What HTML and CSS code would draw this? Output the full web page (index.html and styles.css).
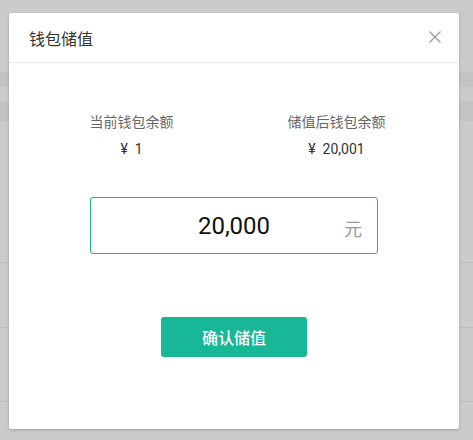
FILE: index.html
```html
<!DOCTYPE html>
<html lang="zh-CN">
<head>
<meta charset="utf-8">
<title>钱包储值</title>
<link rel="stylesheet" href="styles.css">
</head>
<body>
<div class="backdrop">
  <div class="bg-top"></div>
  <div class="bg-band band1"></div>
  <div class="bg-gap"></div>
  <div class="bg-band band2"></div>
  <div class="bg-row r1"></div>
  <div class="bg-row r2"></div>
  <div class="bg-row r3"></div>
</div>
<div class="modal">
  <div class="modal-header">
    <span class="modal-title">钱包储值</span>
    <svg class="close" width="12" height="12" viewBox="0 0 12 12" aria-label="关闭">
      <path d="M0.5 0.5 L11.5 11.5 M11.5 0.5 L0.5 11.5" stroke="#999" stroke-width="1.2" fill="none"/>
    </svg>
  </div>
  <div class="modal-body">
    <div class="balances">
      <div class="bal">
        <div class="bal-label">当前钱包余额</div>
        <div class="bal-value">¥&nbsp;&nbsp;1</div>
      </div>
      <div class="bal">
        <div class="bal-label">储值后钱包余额</div>
        <div class="bal-value">¥&nbsp;&nbsp;20,001</div>
      </div>
    </div>
    <div class="amount">
      <span></span>
      <span class="amount-value">20,000</span>
      <span class="amount-unit">元</span>
    </div>
    <button class="confirm">确认储值</button>
  </div>
</div>
</body>
</html>
```

FILE: styles.css
```css
html, body {
  margin: 0;
  padding: 0;
}
body {
  width: 473px;
  height: 440px;
  background: #cbcbcb;
  font-family: "Roboto", "Noto Sans CJK SC", sans-serif;
  position: relative;
  overflow: hidden;
}
.backdrop {
  display: flex;
  flex-direction: column;
}
.bg-top { height: 72px; }
.bg-band { background: #c3c3c3; }
.band1 { height: 15px; }
.bg-gap { height: 14px; }
.band2 { height: 20px; }
.bg-row { border-bottom: 1px solid #bdbdbd; }
.r1 { height: 141px; }
.r2 { height: 64px; }
.r3 { height: 73px; }

.modal {
  position: absolute;
  left: 9px;
  top: 13px;
  width: 450px;
  height: 416px;
  background: #fff;
  border-radius: 2px;
  box-shadow: 0 1px 3px rgba(0,0,0,0.22);
  display: flex;
  flex-direction: column;
}
.modal-header {
  height: 49px;
  border-bottom: 1px solid #e9e9e9;
  display: flex;
  align-items: center;
  justify-content: space-between;
  padding: 0 18px 0 20px;
}
.modal-title {
  font-size: 16px;
  color: #333;
  margin-top: 1px;
}
.close {
  display: block;
  margin-top: -1px;
}
.modal-body {
  display: flex;
  flex-direction: column;
  align-items: center;
  padding: 49px 20px 0;
}
.balances {
  width: 410px;
  display: grid;
  grid-template-columns: 1fr 1fr;
}
.bal {
  display: flex;
  flex-direction: column;
  align-items: center;
  gap: 7px;
}
.bal-label {
  font-size: 14px;
  line-height: 20px;
  color: #666;
}
.bal-value {
  font-size: 14px;
  line-height: 20px;
  color: #333;
}
.amount {
  margin-top: 38px;
  width: 288px;
  height: 57px;
  box-sizing: border-box;
  border: 1px solid #1ab394;
  border-radius: 3px;
  display: grid;
  grid-template-columns: 1fr auto 1fr;
  align-items: center;
}
.amount-value {
  font-size: 24px;
  color: #111;
  line-height: 30px;
}
.amount-unit {
  justify-self: end;
  padding-right: 15px;
  font-size: 18px;
  color: #999;
  margin-top: 4px;
}
.confirm {
  margin-top: 63px;
  width: 146px;
  height: 40px;
  border: none;
  border-radius: 3px;
  background: #18b797;
  color: #fff;
  font-family: "Noto Sans CJK SC", sans-serif;
  font-size: 16px;
  font-weight: 500;
  padding: 0;
}
```
